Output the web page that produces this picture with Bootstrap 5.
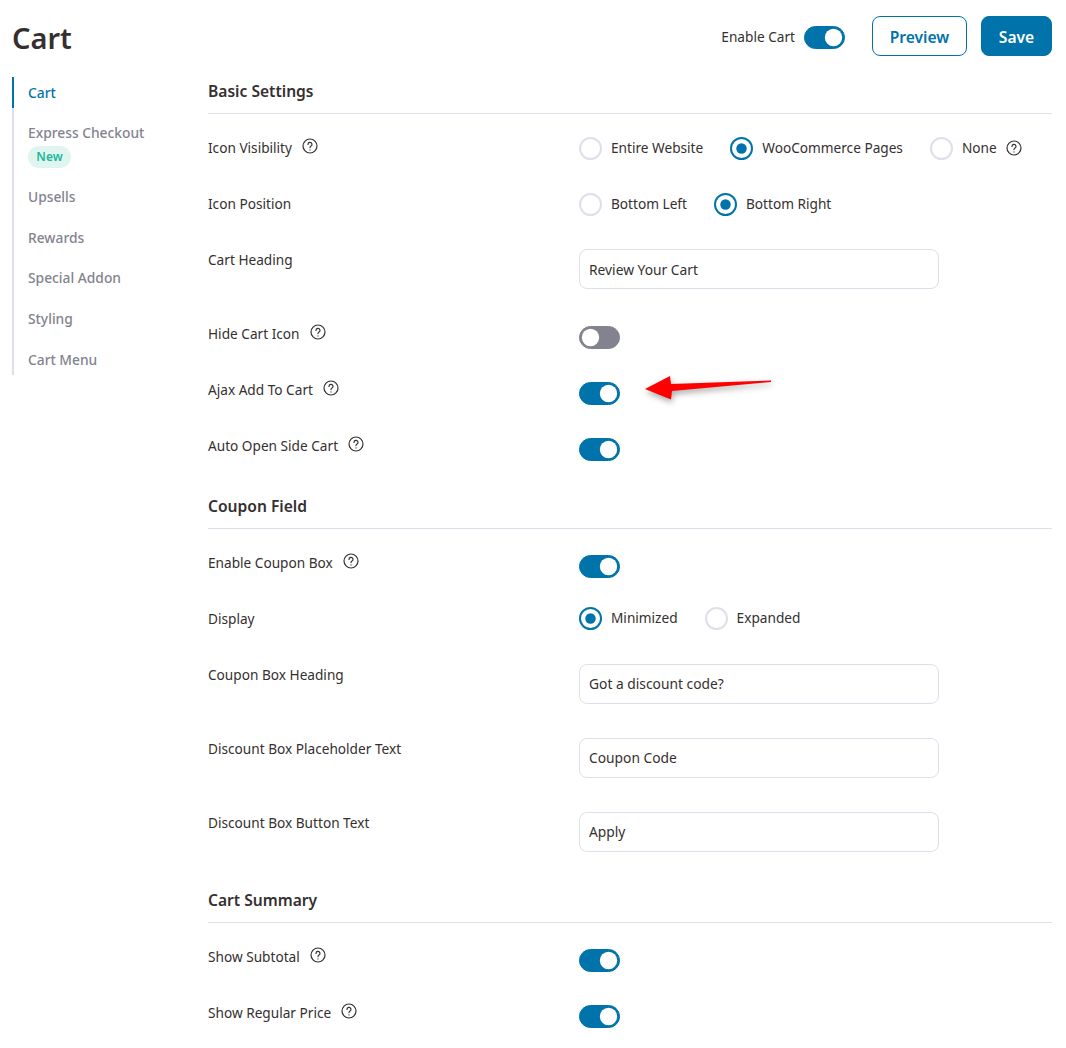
<!DOCTYPE html>
<html lang="en">
<head>
  <meta charset="UTF-8">
  <title>Cart</title>
  <link href="https://cdn.jsdelivr.net/npm/bootstrap@5.3.3/dist/css/bootstrap.min.css" rel="stylesheet">
  <style>
    body {
      font-family: "Noto Sans", sans-serif;
      font-size: 13.65px;
      color: #353030;
      background: #fff;
    }
    .page-wrap {
      position: relative;
      padding: 16px 14px 0 12px;
      height: 1048px;
      overflow: hidden;
    }
    .head-bar {
      height: 40px;
    }
    .page-title {
      font-size: 29px;
      font-weight: 600;
      line-height: 44px;
      margin: 0;
      color: #353030;
    }
    .btn-main, .btn-line {
      height: 40px;
      border-radius: 8px;
      font-size: 15.6px;
      font-weight: 600;
      line-height: 22px;
      padding: 9px 0 7px;
    }
    .btn-main {
      width: 71px;
      --bs-btn-bg: #0073aa;
      --bs-btn-border-color: #0073aa;
      --bs-btn-color: #fff;
    }
    .btn-line {
      width: 95px;
      margin-right: 14px;
      --bs-btn-bg: #fff;
      --bs-btn-border-color: #0073aa;
      --bs-btn-color: #0073aa;
    }
    .head-label {
      margin-top: 3px;
    }
    .head-toggle {
      margin-left: 9px;
      margin-right: 27px;
      margin-top: 3px;
    }
    .body-split {
      margin-top: 21px;
    }
    .side-col {
      width: 196px;
      flex: none;
    }
    .side-nav {
      width: 172px;
      border-left: 2px solid #dedfea;
      gap: 9.7px;
      font-size: 13.8px;
      font-weight: 500;
    }
    .side-nav a {
      display: block;
      margin-left: -2px;
      border-left: 2px solid transparent;
      padding: 5.5px 0 5.5px 14px;
      line-height: 20px;
      color: #82838e;
      text-decoration: none;
    }
    .side-nav a.active {
      color: #0073aa;
      border-left-color: #0073aa;
    }
    .new-tag {
      display: block;
      width: 43px;
      height: 22px;
      margin-top: 3px;
      margin-bottom: -2px;
      border-radius: 11px;
      background: #e0f5ef;
      color: #1db89b;
      font-size: 12px;
      font-weight: 600;
      line-height: 22px;
      text-align: center;
    }
    .section-head {
      font-size: 15.6px;
      font-weight: 600;
      line-height: 22px;
      margin: 20.5px 0 0;
      padding-bottom: 11px;
      border-bottom: 1px solid #dedfea;
    }
    .section-head.first-head {
      margin-top: 3px;
    }
    .rows-wrap {
      padding-top: 6px;
    }
    .set-row {
      display: flex;
      min-height: 56px;
    }
    .set-row.has-input {
      min-height: 74px;
    }
    .set-label {
      width: 371px;
      flex: none;
      padding-top: 18.4px;
      line-height: 20px;
      display: flex;
      align-items: flex-start;
      gap: 10px;
    }
    .help-ico {
      width: 16px;
      height: 16px;
      flex: none;
    }
    .radio-line {
      padding-top: 16px;
      display: flex;
      gap: 27px;
    }
    .radio-item {
      display: flex;
      align-items: center;
      gap: 9px;
      height: 24px;
    }
    .radio-item .form-check-input {
      width: 23px;
      height: 23px;
      margin: 0;
      border: 2px solid #dedfea;
    }
    .radio-item .form-check-input:checked {
      background-color: #fff;
      border-color: #0073aa;
      background-image: url("data:image/svg+xml,%3csvg xmlns='http://www.w3.org/2000/svg' viewBox='-4 -4 8 8'%3e%3ccircle r='2.2' fill='%230073aa'/%3e%3c/svg%3e");
    }
    .form-switch .toggle-in.form-check-input {
      width: 41px;
      height: 23px;
      margin: 0;
      float: none;
      border: 1px solid #82838e;
      border-radius: 12px;
      background-color: #82838e;
      background-image: url("data:image/svg+xml,%3csvg xmlns='http://www.w3.org/2000/svg' viewBox='-4 -4 8 8'%3e%3ccircle r='3.3' fill='%23fff'/%3e%3c/svg%3e");
    }
    .form-switch .toggle-in.form-check-input:checked {
      background-color: #0073aa;
      border-color: #0073aa;
    }
    .form-switch.toggle-box {
      padding: 0;
      min-height: 0;
      margin-bottom: 0;
      display: flex;
    }
    .set-row .toggle-box {
      padding-top: 20px;
    }
    .set-row .form-control {
      width: 360px;
      height: 40px;
      margin-top: 17px;
      border: 1px solid #dedfea;
      border-radius: 8px;
      padding: 8px 9px;
      font-size: 13.8px;
      color: #353030;
    }
    .red-arrow {
      position: absolute;
      left: 640px;
      top: 370px;
      width: 140px;
      height: 40px;
      filter: drop-shadow(1px 3px 3px rgba(0, 0, 0, .35));
    }
  </style>
</head>
<body>
  <div class="page-wrap">
    <div class="d-flex align-items-start justify-content-between head-bar">
      <h1 class="page-title">Cart</h1>
      <div class="d-flex align-items-center">
        <span class="head-label">Enable Cart</span>
        <div class="form-check form-switch toggle-box head-toggle">
          <input class="form-check-input toggle-in" type="checkbox" role="switch" checked aria-label="Enable Cart">
        </div>
        <button type="button" class="btn btn-line">Preview</button>
        <button type="button" class="btn btn-main">Save</button>
      </div>
    </div>

    <div class="d-flex body-split">
      <div class="side-col">
        <nav class="nav flex-column side-nav">
          <a class="active" href="#">Cart</a>
          <a href="#">Express Checkout <span class="new-tag">New</span></a>
          <a href="#">Upsells</a>
          <a href="#">Rewards</a>
          <a href="#">Special Addon</a>
          <a href="#">Styling</a>
          <a href="#">Cart Menu</a>
        </nav>
      </div>

      <div class="flex-grow-1">
        <h2 class="section-head first-head">Basic Settings</h2>
        <div class="rows-wrap">
          <div class="set-row">
            <div class="set-label">Icon Visibility
              <svg class="help-ico" viewBox="0 0 16 16" fill="none" stroke="#353030" stroke-width="1.2" stroke-linecap="round"><circle cx="8" cy="8" r="7"/><path d="M6 6.4a2 2 0 1 1 3 1.7c-.7.4-1 .8-1 1.5"/><path d="M8 11.8v.1"/></svg>
            </div>
            <div class="radio-line">
              <label class="radio-item"><input class="form-check-input" type="radio" name="vis">Entire Website</label>
              <label class="radio-item"><input class="form-check-input" type="radio" name="vis" checked>WooCommerce Pages</label>
              <label class="radio-item"><input class="form-check-input" type="radio" name="vis">None
                <svg class="help-ico" viewBox="0 0 16 16" fill="none" stroke="#353030" stroke-width="1.2" stroke-linecap="round"><circle cx="8" cy="8" r="7"/><path d="M6 6.4a2 2 0 1 1 3 1.7c-.7.4-1 .8-1 1.5"/><path d="M8 11.8v.1"/></svg>
              </label>
            </div>
          </div>
          <div class="set-row">
            <div class="set-label">Icon Position</div>
            <div class="radio-line">
              <label class="radio-item"><input class="form-check-input" type="radio" name="pos">Bottom Left</label>
              <label class="radio-item"><input class="form-check-input" type="radio" name="pos" checked>Bottom Right</label>
            </div>
          </div>
          <div class="set-row has-input">
            <div class="set-label">Cart Heading</div>
            <input type="text" class="form-control" value="Review Your Cart" aria-label="Cart Heading">
          </div>
          <div class="set-row">
            <div class="set-label">Hide Cart Icon
              <svg class="help-ico" viewBox="0 0 16 16" fill="none" stroke="#353030" stroke-width="1.2" stroke-linecap="round"><circle cx="8" cy="8" r="7"/><path d="M6 6.4a2 2 0 1 1 3 1.7c-.7.4-1 .8-1 1.5"/><path d="M8 11.8v.1"/></svg>
            </div>
            <div class="form-check form-switch toggle-box"><input class="form-check-input toggle-in" type="checkbox" role="switch" aria-label="Hide Cart Icon"></div>
          </div>
          <div class="set-row">
            <div class="set-label">Ajax Add To Cart
              <svg class="help-ico" viewBox="0 0 16 16" fill="none" stroke="#353030" stroke-width="1.2" stroke-linecap="round"><circle cx="8" cy="8" r="7"/><path d="M6 6.4a2 2 0 1 1 3 1.7c-.7.4-1 .8-1 1.5"/><path d="M8 11.8v.1"/></svg>
            </div>
            <div class="form-check form-switch toggle-box"><input class="form-check-input toggle-in" type="checkbox" role="switch" checked aria-label="Ajax Add To Cart"></div>
          </div>
          <div class="set-row">
            <div class="set-label">Auto Open Side Cart
              <svg class="help-ico" viewBox="0 0 16 16" fill="none" stroke="#353030" stroke-width="1.2" stroke-linecap="round"><circle cx="8" cy="8" r="7"/><path d="M6 6.4a2 2 0 1 1 3 1.7c-.7.4-1 .8-1 1.5"/><path d="M8 11.8v.1"/></svg>
            </div>
            <div class="form-check form-switch toggle-box"><input class="form-check-input toggle-in" type="checkbox" role="switch" checked aria-label="Auto Open Side Cart"></div>
          </div>
        </div>

        <h2 class="section-head">Coupon Field</h2>
        <div class="rows-wrap">
          <div class="set-row">
            <div class="set-label">Enable Coupon Box
              <svg class="help-ico" viewBox="0 0 16 16" fill="none" stroke="#353030" stroke-width="1.2" stroke-linecap="round"><circle cx="8" cy="8" r="7"/><path d="M6 6.4a2 2 0 1 1 3 1.7c-.7.4-1 .8-1 1.5"/><path d="M8 11.8v.1"/></svg>
            </div>
            <div class="form-check form-switch toggle-box"><input class="form-check-input toggle-in" type="checkbox" role="switch" checked aria-label="Enable Coupon Box"></div>
          </div>
          <div class="set-row">
            <div class="set-label">Display</div>
            <div class="radio-line">
              <label class="radio-item"><input class="form-check-input" type="radio" name="disp" checked>Minimized</label>
              <label class="radio-item"><input class="form-check-input" type="radio" name="disp">Expanded</label>
            </div>
          </div>
          <div class="set-row has-input">
            <div class="set-label">Coupon Box Heading</div>
            <input type="text" class="form-control" value="Got a discount code?" aria-label="Coupon Box Heading">
          </div>
          <div class="set-row has-input">
            <div class="set-label">Discount Box Placeholder Text</div>
            <input type="text" class="form-control" value="Coupon Code" aria-label="Discount Box Placeholder Text">
          </div>
          <div class="set-row has-input">
            <div class="set-label">Discount Box Button Text</div>
            <input type="text" class="form-control" value="Apply" aria-label="Discount Box Button Text">
          </div>
        </div>

        <h2 class="section-head">Cart Summary</h2>
        <div class="rows-wrap">
          <div class="set-row">
            <div class="set-label">Show Subtotal
              <svg class="help-ico" viewBox="0 0 16 16" fill="none" stroke="#353030" stroke-width="1.2" stroke-linecap="round"><circle cx="8" cy="8" r="7"/><path d="M6 6.4a2 2 0 1 1 3 1.7c-.7.4-1 .8-1 1.5"/><path d="M8 11.8v.1"/></svg>
            </div>
            <div class="form-check form-switch toggle-box"><input class="form-check-input toggle-in" type="checkbox" role="switch" checked aria-label="Show Subtotal"></div>
          </div>
          <div class="set-row">
            <div class="set-label">Show Regular Price
              <svg class="help-ico" viewBox="0 0 16 16" fill="none" stroke="#353030" stroke-width="1.2" stroke-linecap="round"><circle cx="8" cy="8" r="7"/><path d="M6 6.4a2 2 0 1 1 3 1.7c-.7.4-1 .8-1 1.5"/><path d="M8 11.8v.1"/></svg>
            </div>
            <div class="form-check form-switch toggle-box"><input class="form-check-input toggle-in" type="checkbox" role="switch" checked aria-label="Show Regular Price"></div>
          </div>
        </div>
      </div>
    </div>

    <svg class="red-arrow" viewBox="0 0 140 40"><polygon points="5,19 30,6 31,14 131,10.5 131,12 32,21 31,29.5" fill="#f00"/></svg>
  </div>
  <script src="https://cdn.jsdelivr.net/npm/bootstrap@5.3.3/dist/js/bootstrap.bundle.min.js"></script>
</body>
</html>
